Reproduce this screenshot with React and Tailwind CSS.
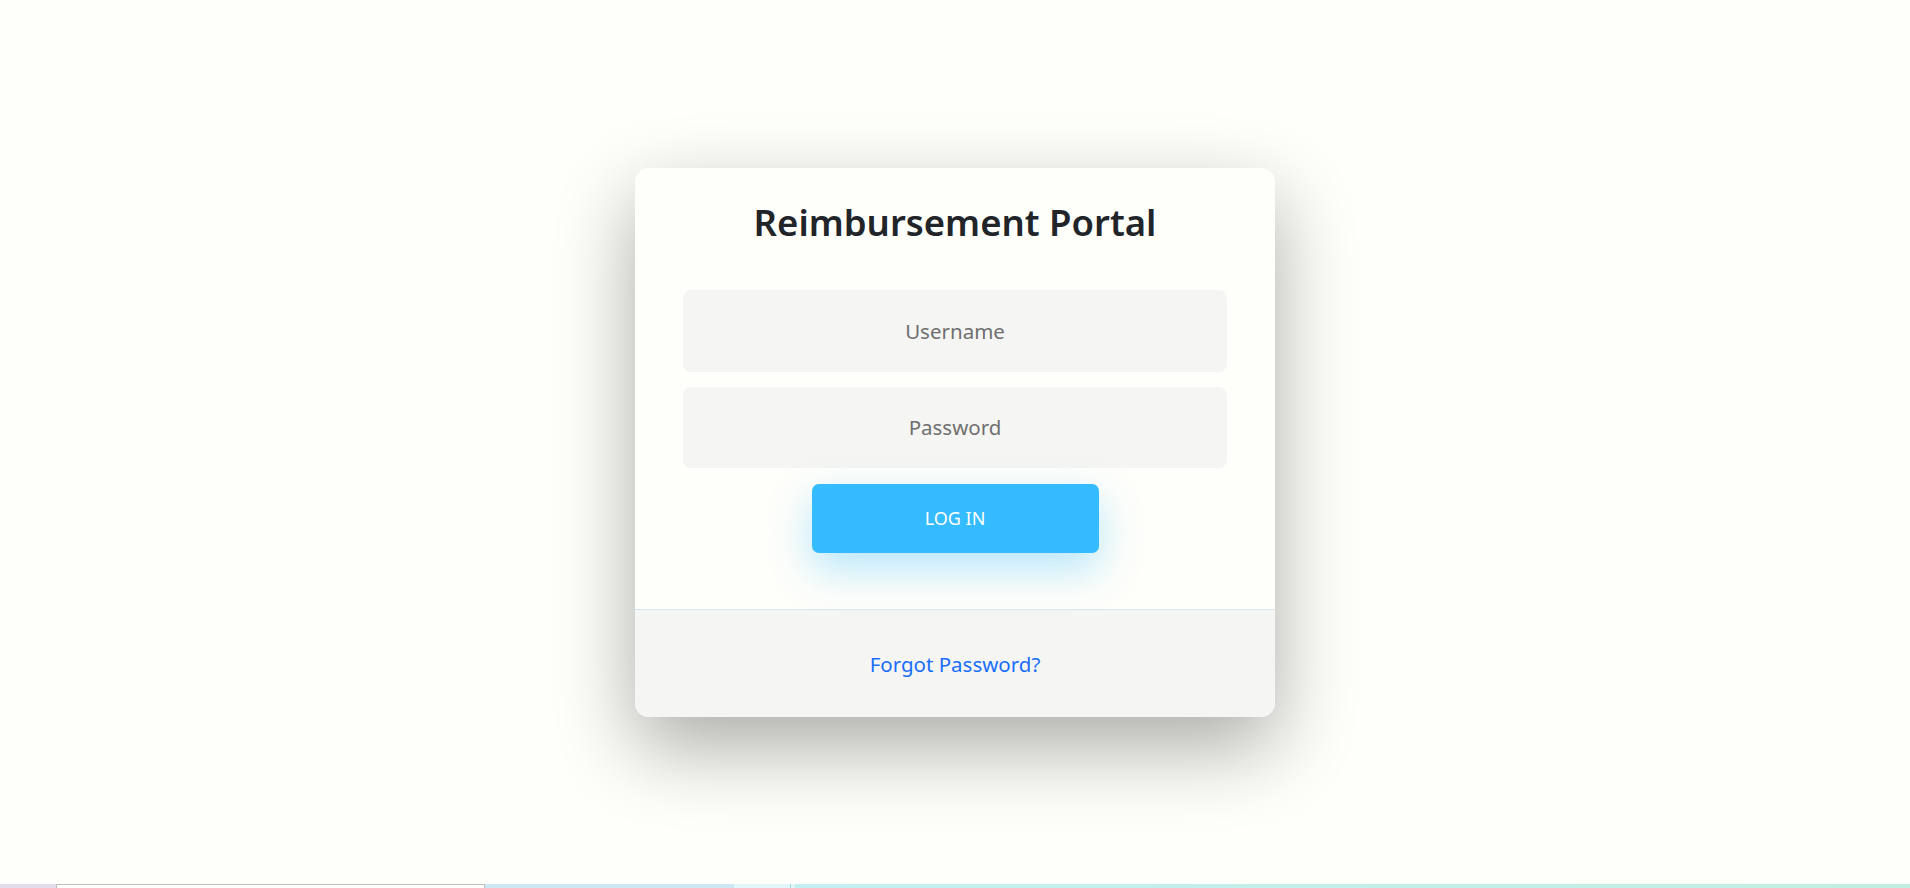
import React from "react";

export default function App() {
  return (
    <div
      className="flex h-screen w-full flex-col bg-[#fefefa]"
      style={{ fontFamily: '"Noto Sans", "Open Sans", sans-serif' }}
    >
      <div className="flex flex-1 items-center justify-center">
        <div className="w-[640px] overflow-hidden rounded-[14px] bg-[#fefefa] shadow-[0_30px_80px_rgba(0,0,0,0.33)]">
          <div className="flex flex-col items-center px-12 pt-[30px] pb-[56px]">
            <h1 className="h-[48px] text-[36.5px] leading-[48px] font-semibold text-[#212529]">
              Reimbursement Portal
            </h1>
            <div className="mt-[44px] flex w-full flex-col gap-[15px]">
              <input
                type="text"
                placeholder="Username"
                className="h-[82px] w-full rounded-lg bg-[#f5f5f3] text-center text-[20.5px] text-[#212529] outline-none placeholder:text-[#6f6f6f]"
              />
              <input
                type="password"
                placeholder="Password"
                className="h-[81px] w-full rounded-lg bg-[#f5f5f3] text-center text-[20.5px] text-[#212529] outline-none placeholder:text-[#6f6f6f]"
              />
            </div>
            <button className="mt-[16px] h-[69px] w-[287px] rounded-[7px] bg-[#35bbff] text-[18px] text-white shadow-[0_16px_40px_rgba(51,187,255,0.35)]">
              LOG IN
            </button>
          </div>
          <div className="flex h-[108px] items-center justify-center border-t border-[#d6e6f4] bg-[#f5f5f3] pt-[3px]">
            <a href="#" className="text-[20.5px] text-[#1a6efd]">
              Forgot Password?
            </a>
          </div>
        </div>
      </div>
      <div className="flex h-[4px] w-full">
        <div className="w-[56px] bg-[#e3dcea]" />
        <div className="w-[429px] border border-b-0 border-[#bdbdbd] bg-white" />
        <div className="w-[249px] bg-[#cfe7f2]" />
        <div className="w-[56px] bg-[#e0f6f8]" />
        <div className="w-[1px] bg-[#a8d4dc]" />
        <div className="w-[4px] bg-[#e0f6f8]" />
        <div className="flex-1 bg-gradient-to-r from-[#c2f0f2] to-[#c0f0e2]" />
      </div>
    </div>
  );
}
